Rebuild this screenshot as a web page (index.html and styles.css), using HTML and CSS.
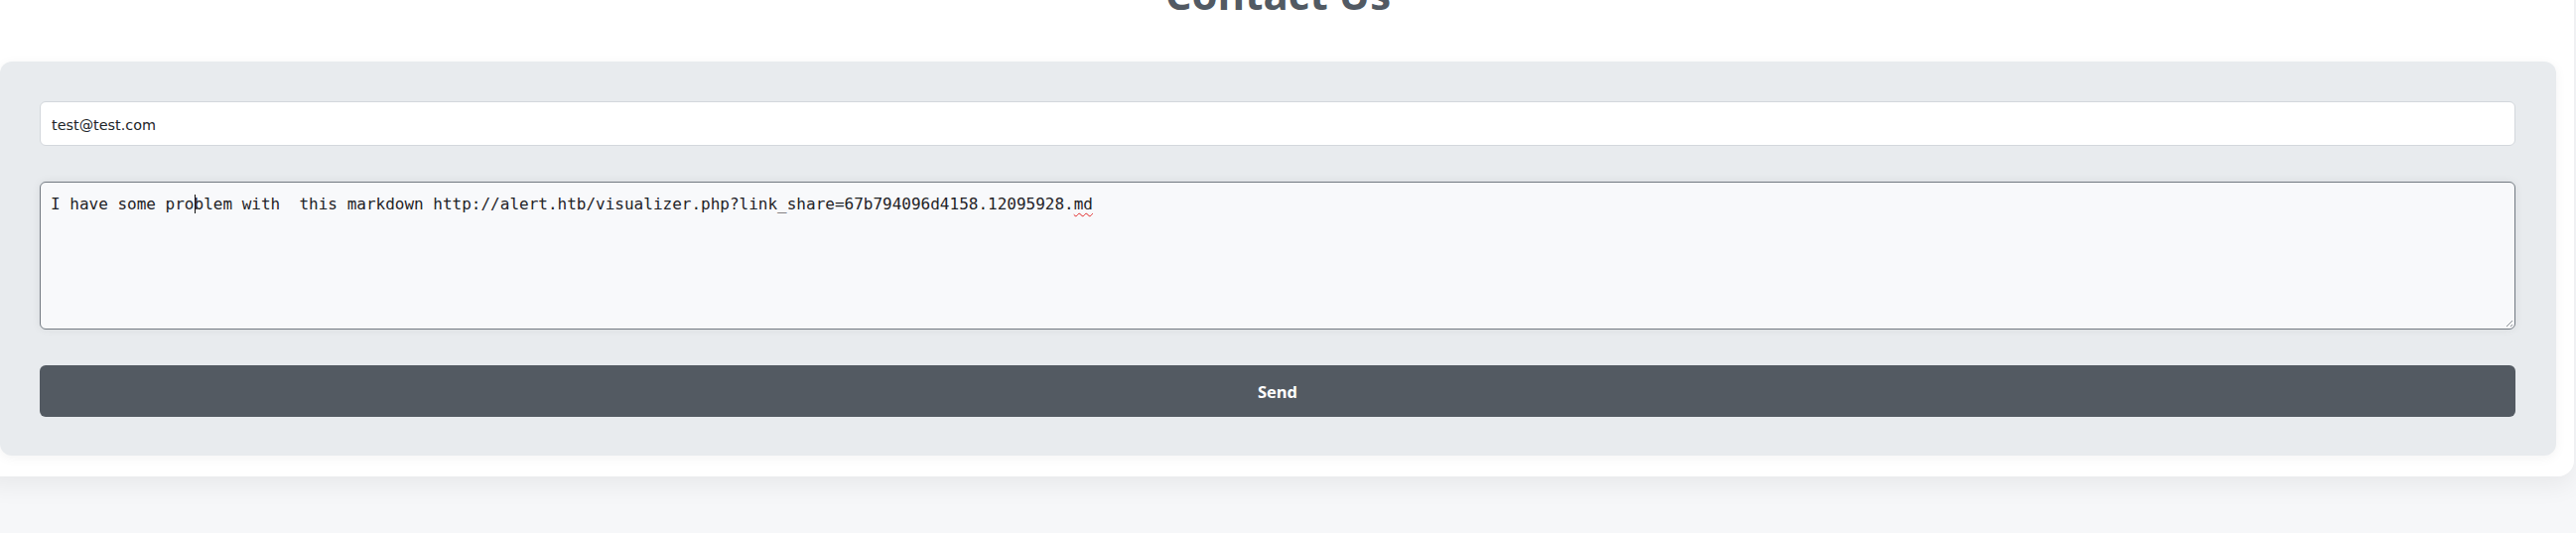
FILE: index.html
```html
<!DOCTYPE html>
<html lang="en">
<head>
<meta charset="utf-8">
<title>Contact Us</title>
<link rel="stylesheet" href="styles.css">
</head>
<body>
<div class="card">
  <h1 class="title">Contact Us</h1>
  <section class="panel">
    <form class="form">
      <input class="field" type="email" value="test@test.com">
      <div class="message" role="textbox" aria-multiline="true">I have some pro<span class="caret"></span>blem with&nbsp; this markdown http://alert.htb/visualizer.php?link_share=67b794096d4158.12095928.<span class="misspelled">md</span><span class="grip"></span></div>
      <button class="send" type="button">Send</button>
    </form>
  </section>
</div>
</body>
</html>
```

FILE: styles.css
```css
html, body {
  margin: 0;
  padding: 0;
}
body {
  background: #f6f7f9;
  font-family: "Open Sans", "DejaVu Sans", sans-serif;
  overflow: hidden;
  height: 537px;
}
.card {
  background: #ffffff;
  margin: -35px 2px 0 -20px;
  padding: 0 18px 21px 20px;
  border-radius: 0 0 16px 16px;
  box-shadow: 0 10px 24px rgba(0, 0, 0, 0.06);
}
.title {
  margin: 0 0 40px;
  text-align: center;
  font-size: 42px;
  font-weight: 700;
  line-height: 57px;
  color: #525a63;
}
.panel {
  background: #e8ebee;
  border-radius: 12px;
  padding: 40px 41px 39px 40px;
  box-shadow: 0 2px 12px rgba(0, 0, 0, 0.05);
}
.form {
  display: flex;
  flex-direction: column;
  gap: 36px;
}
.field {
  box-sizing: border-box;
  height: 45px;
  width: 100%;
  margin: 0;
  border: 1px solid #d3d7dc;
  border-radius: 6px;
  background: #ffffff;
  padding: 2px 11px 0;
  font-family: "DejaVu Sans", sans-serif;
  font-size: 14.4px;
  color: #212529;
  outline: none;
}
.message {
  position: relative;
  box-sizing: border-box;
  height: 149px;
  border: 1px solid #737a82;
  border-radius: 6px;
  background: #f8f9fb;
  padding: 12px 10px;
  font-family: "DejaVu Sans Mono", monospace;
  font-size: 16px;
  color: #1f2327;
  white-space: pre-wrap;
  box-shadow: 0 0 10px rgba(0, 0, 0, 0.07);
}
.caret {
  display: inline-block;
  width: 1px;
  height: 19px;
  margin-right: -1px;
  background: #111111;
  vertical-align: -4px;
}
.misspelled {
  text-decoration: underline wavy #e02424;
  text-decoration-thickness: 1px;
  text-underline-offset: 3px;
}
.grip {
  position: absolute;
  right: 2px;
  bottom: 2px;
  width: 9px;
  height: 9px;
  background: repeating-linear-gradient(135deg, transparent 0 2px, #8a8f95 2px 3px);
  clip-path: polygon(100% 0, 100% 100%, 0 100%);
}
.send {
  height: 52px;
  width: 100%;
  border: none;
  border-radius: 6px;
  background: #535a62;
  color: #ffffff;
  font-family: "Open Sans", sans-serif;
  font-weight: 700;
  font-size: 16.5px;
  cursor: pointer;
}
```
